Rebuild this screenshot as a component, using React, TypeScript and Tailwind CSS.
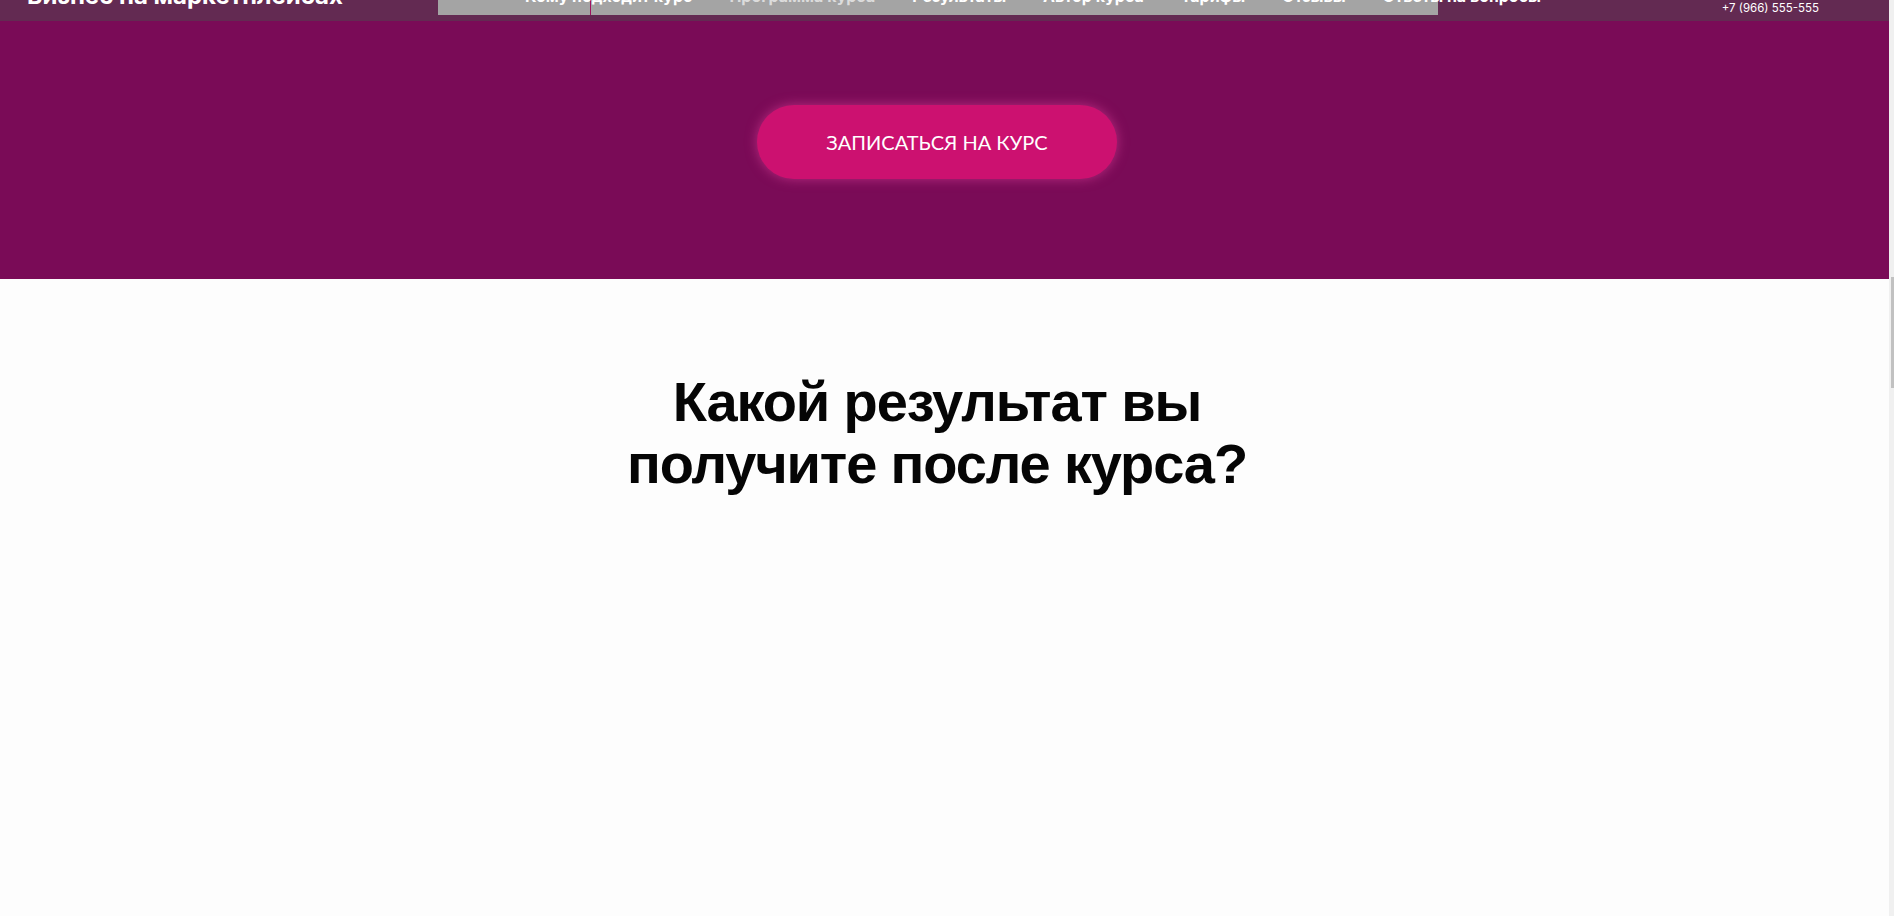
import React from "react";

const navItems = [
    { label: "Кому подходит курс", active: false },
    { label: "Программа курса", active: true },
    { label: "Результаты", active: false },
    { label: "Автор курса", active: false },
    { label: "Тарифы", active: false },
    { label: "Отзывы", active: false },
    { label: "Ответы на вопросы", active: false },
];

const Header: React.FC = () => {
    return (
        <header className="relative h-[21px] bg-[#632a52] overflow-hidden font-['Inter',sans-serif]">
            {/* grey strip left from the scrolled nav */}
            <div className="absolute left-[438px] top-0 h-[15px] w-[1000px] bg-[#a4a4a4]" />
            <div className="absolute left-[590px] top-0 h-[15px] w-px bg-[#a0115f]" />
            <div className="relative flex items-start h-full">
                <div className="pl-[27px] w-[525px] -mt-[17px] text-[24px] leading-[26px] font-bold text-white whitespace-nowrap">
                    Бизнес на маркетплейсах
                </div>
                <nav className="flex gap-[37px] -mt-[13px] text-[16px] leading-[18px] font-bold whitespace-nowrap">
                    {navItems.map((item) => (
                        <span key={item.label} className={item.active ? "text-[#dcdcdc]" : "text-white"}>
                            {item.label}
                        </span>
                    ))}
                </nav>
                <div className="ml-auto mr-[70px] mt-[1px] text-[11.5px] leading-[14px] text-white whitespace-nowrap">
                    +7 (966) 555-555
                </div>
            </div>
        </header>
    );
};

const App: React.FC = () => {
    return (
        <div className="flex h-[916px] overflow-hidden bg-[#fdfdfd]">
            <div className="flex-1 flex flex-col">
                <Header />
                <section className="h-[258px] bg-[#7a0b57] flex justify-center pt-[84px] pr-[15px]">
                    <button className="w-[360px] h-[74px] rounded-full bg-[#cc1170] text-white text-[20px] font-['Lato',sans-serif] shadow-[0_0_12px_rgba(235,70,160,0.55)]">
                        ЗАПИСАТЬСЯ НА КУРС
                    </button>
                </section>
                <section className="flex-1 flex justify-center pt-[92px] pr-[15px]">
                    <h2 className="text-center text-[56px] leading-[62px] font-bold tracking-[-0.02em] text-[#050505] font-['Liberation_Sans',Arial,sans-serif]">
                        Какой результат вы
                        <br />
                        получите после курса?
                    </h2>
                </section>
            </div>
            {/* scrollbar */}
            <div className="w-[5px] bg-[#f0f0f0] flex justify-end">
                <div className="mt-[277px] h-[111px] w-[3px] bg-[#c1c1c1]" />
            </div>
        </div>
    );
};

export default App;
